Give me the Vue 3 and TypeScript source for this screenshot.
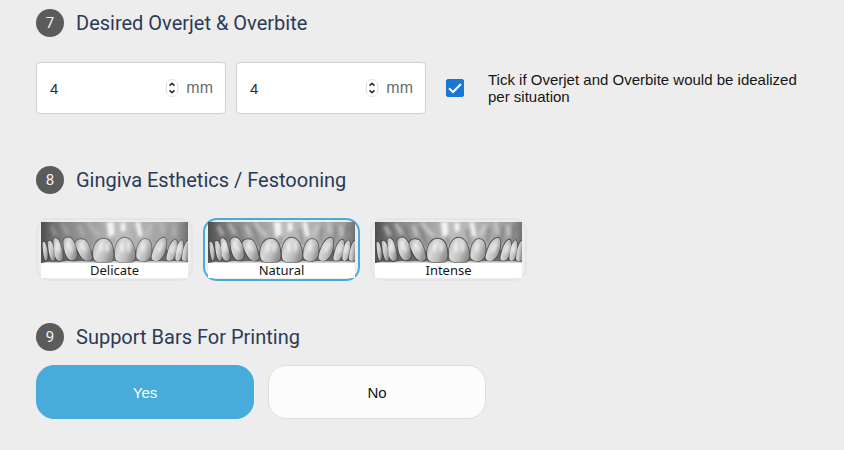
<script setup lang="ts">
import { ref } from 'vue'

interface Esthetic {
  id: string
  label: string
  depth: number
}

const measures = ref([
  { id: 'overjet', label: 'Overjet', value: 4 },
  { id: 'overbite', label: 'Overbite', value: 4 },
])
const idealized = ref(true)
const esthetic = ref('natural')
const support = ref('Yes')

const esthetics: Esthetic[] = [
  { id: 'delicate', label: 'Delicate', depth: 0.2 },
  { id: 'natural', label: 'Natural', depth: 0.6 },
  { id: 'intense', label: 'Intense', depth: 0.7 },
]

const teeth: string[] = [
  'M4 62C10 54 15 66 19 84C22 100 20 116 14 116C8 110 5 80 4 62Z',
  'M20 60C26 50 35 60 39 80C43 100 43 116 36 117C28 117 22 90 20 60Z',
  'M37 56C38 44 49 46 56 62C64 84 68 106 63 114C55 121 46 116 41 100Z',
  'M67 60C66 47 80 42 91 50C103 62 108 84 107 102C105 112 96 117 87 114C75 108 67 82 67 60Z',
  'M103 66C102 53 118 48 131 54C143 62 148 84 152 104C153 114 146 118 135 117C121 112 109 88 103 66Z',
  'M156 98C155 74 164 53 186 50C209 50 217 72 217 98C217 113 212 120 200 120L172 120C160 118 156 108 156 98Z',
  'M221 98C220 71 230 47 251 47C271 49 282 74 282 98C282 111 277 119 266 120L236 120C225 118 221 110 221 98Z',
  'M285 100C285 77 294 53 310 51C327 51 332 66 331 88C330 105 324 116 310 118C295 118 285 113 285 100Z',
  'M331 104C335 79 350 47 369 47C378 51 376 70 372 88C366 106 353 119 342 117C334 115 330 112 331 104Z',
  'M375 110C378 86 389 55 402 53C411 55 407 80 401 102C395 118 380 121 375 110Z',
  'M402 108C403 84 411 55 422 55C429 64 425 90 419 108C412 121 403 118 402 108Z',
  'M422 112C422 92 429 66 438 56L440 58L440 115C434 119 424 118 422 112Z',
]
</script>

<template>
  <main class="page">
    <section class="section measures">
      <h2 class="heading"><span class="step">7</span>Desired Overjet &amp; Overbite</h2>
      <div class="row fields">
        <div v-for="m in measures" :key="m.id" class="field">
          <input v-model.number="m.value" type="number" class="number" :aria-label="m.label" />
          <span class="stepper">
            <button type="button" :aria-label="'Increase ' + m.label" @click="m.value++">
              <svg viewBox="0 0 12 9"><path d="M3 6.500 6 3.700l3 2.800" /></svg>
            </button>
            <button type="button" :aria-label="'Decrease ' + m.label" @click="m.value--">
              <svg viewBox="0 0 12 9"><path d="M3 2.500 6 5.300l3-2.800" /></svg>
            </button>
          </span>
          <span class="unit">mm</span>
        </div>
        <label class="tick">
          <span class="box">
            <input v-model="idealized" type="checkbox" />
            <svg v-if="idealized" viewBox="0 0 18 18"><path d="M3 9.300 7 13 15 5" /></svg>
          </span>
          <span class="tick-text">Tick if Overjet and Overbite would be idealized per situation</span>
        </label>
      </div>
    </section>

    <section class="section gingiva">
      <h2 class="heading"><span class="step">8</span>Gingiva Esthetics / Festooning</h2>
      <div class="row cards">
        <label v-for="e in esthetics" :key="e.id" class="card" :class="{ selected: esthetic === e.id }">
          <input v-model="esthetic" type="radio" name="esthetic" :value="e.id" />
          <svg class="teeth" viewBox="0 0 440 123" preserveAspectRatio="none" aria-hidden="true">
            <defs>
              <linearGradient :id="e.id + '-gum'" x1="0" x2="1" y1="0" y2="0">
                <stop offset="0" stop-color="#4c4c4c" />
                <stop offset=".08" stop-color="#6f6f6f" />
                <stop offset=".2" stop-color="#8c8c8c" />
                <stop offset=".38" stop-color="#a3a3a3" />
                <stop offset=".52" stop-color="#bdbdbd" />
                <stop offset=".72" stop-color="#b0b0b0" />
                <stop offset=".93" stop-color="#9a9a9a" />
                <stop offset="1" stop-color="#707070" />
              </linearGradient>
              <linearGradient :id="e.id + '-tooth'" x1="0" x2="1" y1="0" y2=".5">
                <stop offset="0" stop-color="#b0b0b0" />
                <stop offset=".4" stop-color="#d8d8d8" />
                <stop offset=".75" stop-color="#bcbcbc" />
                <stop offset="1" stop-color="#949494" />
              </linearGradient>
              <filter :id="e.id + '-soft'" x="-20%" y="-30%" width="140%" height="160%">
                <feGaussianBlur stdDeviation="4" />
              </filter>
              <filter :id="e.id + '-edge'" x="-10%" y="-10%" width="120%" height="120%">
                <feGaussianBlur stdDeviation="1.6" />
              </filter>
            </defs>
            <rect width="440" height="123" :fill="`url(#${e.id}-gum)`" />
            <g :filter="`url(#${e.id}-soft)`">
              <g fill="none" stroke="#dcdcdc" stroke-width="11" :opacity="0.15 + e.depth * 0.6">
                <path d="M30 12 44 40M62 4 80 36M114 10 126 42M140 0C154 24 166 34 176 42M330 8 314 42M360 0 366 34M398 10 400 42" />
              </g>
              <g fill="none" stroke="#555" stroke-width="7" :opacity="e.depth * 0.65">
                <path d="M8 0 22 54M46 14 62 60M88 12 104 56M134 16C144 36 148 50 154 72M216 30 219 68M274 22 284 68M342 16 336 60M384 12 378 60M416 10 410 56" />
              </g>
              <path d="M196 0h22l2 38-18 8zM238 2h15l0 24-14 4zM282 0h14l8 44-12-2z" fill="#fff" opacity=".85" />
            </g>
            <g :filter="`url(#${e.id}-edge)`">
              <path d="M0 72 20 80 40 78 66 86 98 74 112 88 136 104 154 84 162 104 218 82 230 104 283 84 296 104 331 80 340 100 374 78 384 96 405 80 424 80 440 74V117H0Z" fill="#555" opacity=".75" />
              <g fill="none" stroke="#444" stroke-width="5" :opacity="0.55 + e.depth * 0.5">
                <path v-for="(d, i) in teeth" :key="i" :d="d" />
              </g>
            </g>
            <path v-for="(d, i) in teeth" :key="i" :d="d" :fill="`url(#${e.id}-tooth)`" />
            <g :filter="`url(#${e.id}-soft)`" fill="none" stroke="#fafafa" stroke-width="10" stroke-linecap="round" opacity=".7">
              <path d="M78 62 90 84M120 68 130 82M182 66 178 84M198 68 198 84M241 65 243 86M261 62 262 84M308 68 304 84M362 66 352 86M398 72 392 90M49 66 52 84M417 72 414 88" />
            </g>
            <path d="M0 123 20 119 52 121 80 117 98 119 122 118 149 119 170 122 206 122 220 118 236 122 270 122 286 118 312 120 336 118 372 119 404 118 440 119V123Z" fill="#d6d6d6" />
          </svg>
          <span class="caption">{{ e.label }}</span>
        </label>
      </div>
    </section>

    <section class="section">
      <h2 class="heading"><span class="step">9</span>Support Bars For Printing</h2>
      <div class="row choices">
        <button
          v-for="option in ['Yes', 'No']"
          :key="option"
          type="button"
          class="choice"
          :class="{ active: support === option }"
          :aria-pressed="support === option"
          @click="support = option"
        >
          {{ option }}
        </button>
      </div>
    </section>
  </main>
</template>

<style>
body {
  background: #ededed;
}
</style>

<style scoped>
* {
  box-sizing: border-box;
}

.page {
  padding: 9px 36px 30px;
  color: #161616;
  font-family: 'Liberation Sans', Arial, sans-serif;
  font-size: 15px;
}

.measures {
  margin-bottom: 52px;
}

.gingiva {
  margin-bottom: 42px;
}

.heading {
  display: flex;
  align-items: center;
  gap: 12px;
  height: 28px;
  margin: 0;
  color: #2b3b55;
  font-family: Roboto, 'Liberation Sans', sans-serif;
  font-size: 20px;
  font-weight: 400;
}

.step {
  display: grid;
  place-items: center;
  width: 28px;
  height: 28px;
  border-radius: 50%;
  background: #5b5b5b;
  color: #f2f2f2;
  font-size: 15px;
}

.row {
  display: flex;
}

.fields {
  align-items: center;
  gap: 10px;
  margin-top: 25px;
}

.field {
  display: flex;
  flex: 0 1 190px;
  align-items: center;
  min-width: 0;
  height: 52px;
  padding: 0 12px 0 13px;
  border: 1px solid #cfcfcf;
  border-radius: 4px;
  background: #fff;
}

.number {
  flex: 1;
  min-width: 0;
  padding: 0;
  border: 0;
  outline: 0;
  background: transparent;
  color: #2b2b2b;
  font: inherit;
  appearance: textfield;
}

.number::-webkit-inner-spin-button {
  appearance: none;
}

.stepper {
  display: flex;
  flex-direction: column;
  width: 12px;
  margin-right: 8px;
  border: 1px solid #e2e2e2;
  border-radius: 6px;
}

.stepper button {
  display: block;
  height: 8px;
  padding: 0;
  border: 0;
  background: transparent;
}

.stepper svg {
  display: block;
  width: 10px;
  height: 8px;
  fill: none;
  stroke: #333;
  stroke-width: 2;
}

.unit {
  color: #6c6c6c;
  font-size: 16px;
}

.tick {
  display: flex;
  flex: 1;
  align-items: center;
  gap: 24px;
  padding-left: 10px;
}

.box {
  display: grid;
  flex: none;
  width: 18px;
  height: 18px;
}

.box input {
  grid-area: 1 / 1;
  width: 18px;
  height: 18px;
  margin: 0;
  border: 1px solid #1976d2;
  border-radius: 2px;
  background: #fff;
  appearance: none;
}

.box input:checked {
  background: #1976d2;
}

.box svg {
  grid-area: 1 / 1;
  fill: none;
  stroke: #fff;
  stroke-width: 2;
  pointer-events: none;
}

.tick-text {
  line-height: 17px;
}

.cards {
  gap: 10px;
  margin-top: 24px;
}

.card {
  display: flex;
  position: relative;
  flex: 0 1 157px;
  flex-direction: column;
  min-width: 0;
  padding: 2px 3px 1px;
  border: 2px solid #e5e5e5;
  border-radius: 14px;
}

.card.selected {
  border-color: #48acda;
}

.card input {
  position: absolute;
  opacity: 0;
}

.teeth {
  display: block;
  width: 100%;
  height: 41px;
}

.caption {
  height: 15px;
  background: #fff;
  font-family: 'Noto Sans', 'Open Sans', sans-serif;
  font-size: 13px;
  line-height: 14px;
  text-align: center;
}

.choices {
  gap: 14px;
  margin-top: 14px;
}

.choice {
  flex: 0 1 218px;
  height: 54px;
  border: 1px solid #dedede;
  border-radius: 18px;
  background: #fcfcfc;
  color: #161616;
  font: inherit;
}

.choice.active {
  border-color: #48acda;
  background: #48acda;
  color: #fff;
}
</style>
